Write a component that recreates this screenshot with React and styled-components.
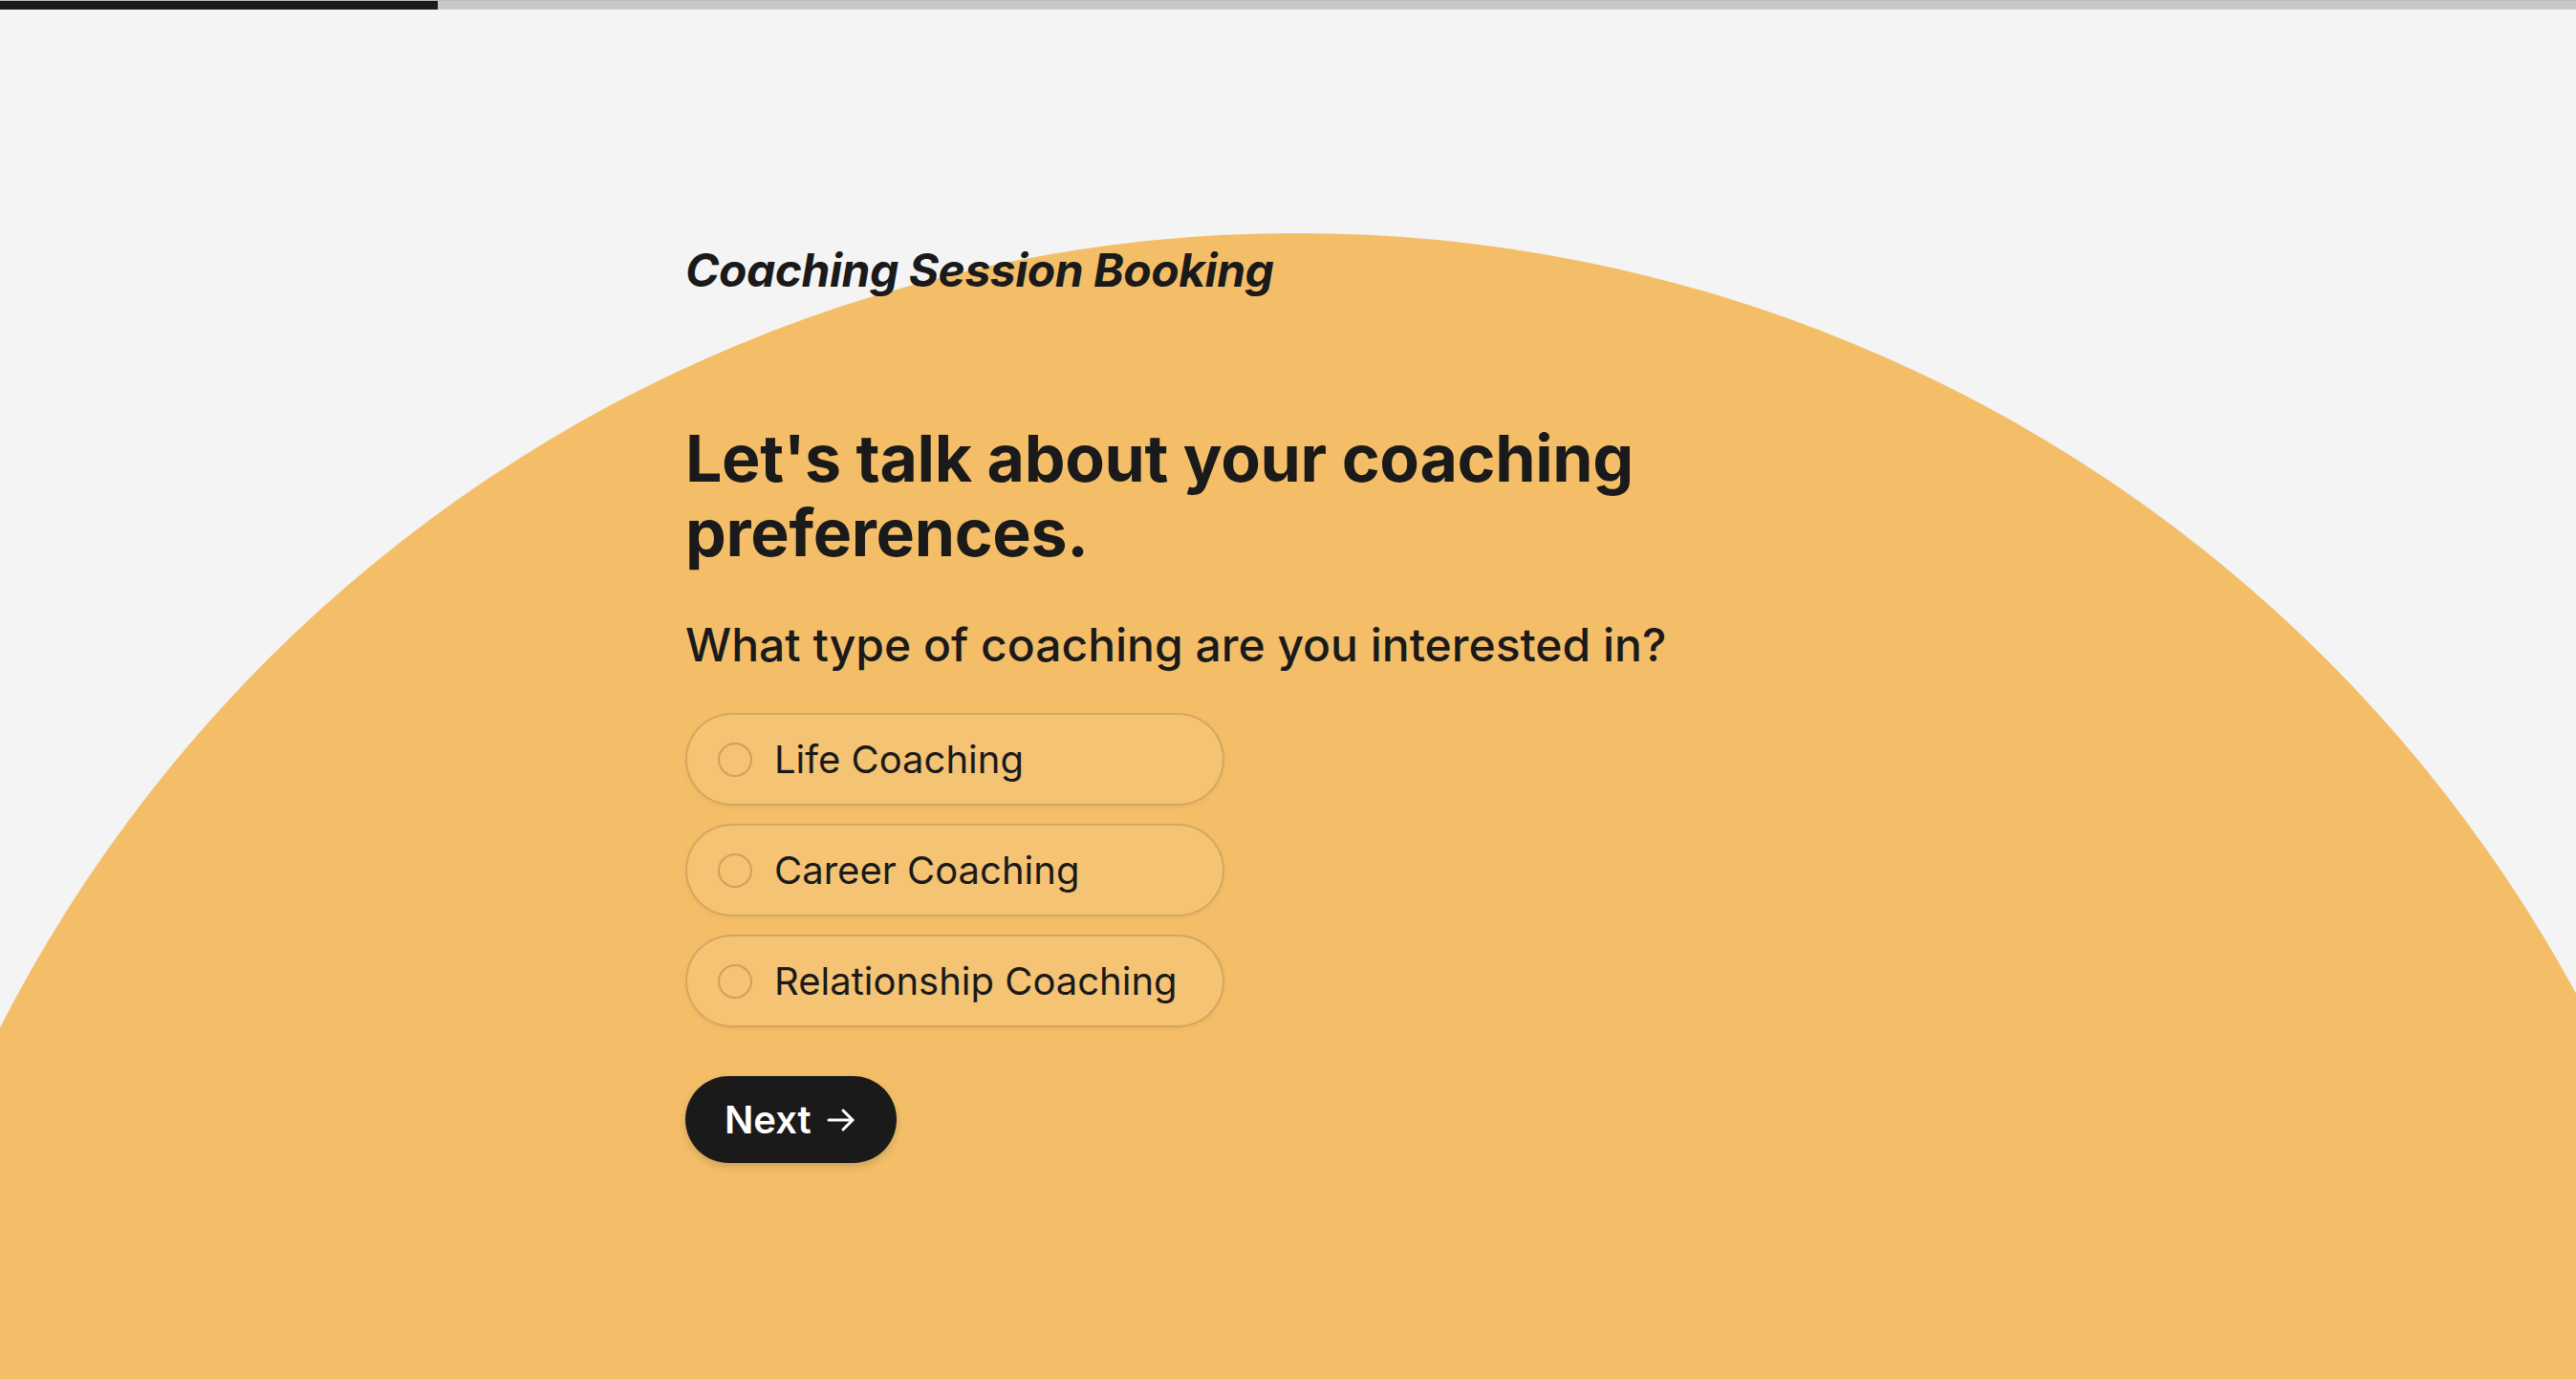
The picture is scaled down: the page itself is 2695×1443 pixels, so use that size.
import styled, { createGlobalStyle } from "styled-components";
import { useState } from "react";

const GlobalStyle = createGlobalStyle`
    html, body {
        margin: 0;
        padding: 0;
        background: #f4f4f4;
    }
    * {
        box-sizing: border-box;
    }
`

const options = ["Life Coaching", "Career Coaching", "Relationship Coaching"]

const App = () => {
    const [selected, setSelected] = useState(null)

    return <Page>
        <GlobalStyle />
        <Progress>
            <ProgressFill style={{ width: "17%" }} />
        </Progress>
        <Arc />
        <Content>
            <Brand>Coaching Session Booking</Brand>
            <Heading>Let's talk about your coaching preferences.</Heading>
            <Question>What type of coaching are you interested in?</Question>
            <OptionList>
                {options.map((option) => (
                    <Option key={option} onClick={() => setSelected(option)}>
                        <Radio $checked={selected === option} />
                        {option}
                    </Option>
                ))}
            </OptionList>
            <NextButton>
                Next
                <svg width="30" height="30" viewBox="0 0 30 30" fill="none" stroke="currentColor" strokeWidth="3" strokeLinecap="round" strokeLinejoin="round">
                    <path d="M2 15h25" />
                    <path d="M17 5l10 10-10 10" />
                </svg>
            </NextButton>
        </Content>
    </Page>
}

const Page = styled.div`
    position: relative;
    height: 100vh;
    overflow: hidden;
    background: #f4f4f4;
    font-family: Inter, "Noto Sans", sans-serif;
    color: #1a1a1a;
`
const Progress = styled.div`
    position: relative;
    z-index: 2;
    height: 10px;
    background: #c8c8c8;
    border-top: 1px solid #bdbdbd;
`
const ProgressFill = styled.div`
    height: 100%;
    background: #1a1a1a;
`
const Arc = styled.div`
    position: absolute;
    left: -166px;
    top: 244px;
    width: 3046px;
    height: 3046px;
    border-radius: 50%;
    background: #f4be69;
    z-index: 0;
`
const Content = styled.main`
    position: relative;
    z-index: 1;
    width: 1261px;
    margin: 0 auto;
    padding-top: 244px;
    display: flex;
    flex-direction: column;
    align-items: flex-start;
`
const Brand = styled.h2`
    margin: 0;
    font-size: 48px;
    line-height: 58px;
    font-weight: 700;
    font-style: italic;
    letter-spacing: -0.01em;
`
const Heading = styled.h1`
    margin: 128px 0 0;
    max-width: 1100px;
    font-size: 68px;
    line-height: 78px;
    font-weight: 700;
    letter-spacing: -0.005em;
`
const Question = styled.p`
    margin: 49px 0 0;
    font-size: 48px;
    line-height: 60px;
    font-weight: 500;
`
const OptionList = styled.div`
    margin-top: 41px;
    display: flex;
    flex-direction: column;
    gap: 19px;
`
const Option = styled.label`
    width: 564px;
    height: 97px;
    display: flex;
    align-items: center;
    gap: 23px;
    padding-left: 32px;
    border: 2px solid rgba(150, 105, 40, 0.32);
    border-radius: 999px;
    background: rgba(255, 255, 255, 0.08);
    box-shadow: 0 2px 4px rgba(120, 80, 20, 0.08);
    font-size: 40px;
    font-weight: 400;
    cursor: pointer;
`
const Radio = styled.span`
    width: 36px;
    height: 36px;
    flex-shrink: 0;
    border-radius: 50%;
    border: 2px solid rgba(150, 105, 40, 0.38);
    background: ${(props) => props.$checked ? "#1a1a1a" : "transparent"};
`
const NextButton = styled.button`
    margin-top: 51px;
    height: 91px;
    padding: 0 43px 0 41px;
    display: flex;
    align-items: center;
    gap: 16px;
    border: 0;
    border-radius: 999px;
    background: #1a1a1a;
    color: #ffffff;
    font-family: Inter, "Noto Sans", sans-serif;
    font-size: 40px;
    font-weight: 600;
    box-shadow: 0 4px 8px rgba(0, 0, 0, 0.15);
    cursor: pointer;
`

export default App;
